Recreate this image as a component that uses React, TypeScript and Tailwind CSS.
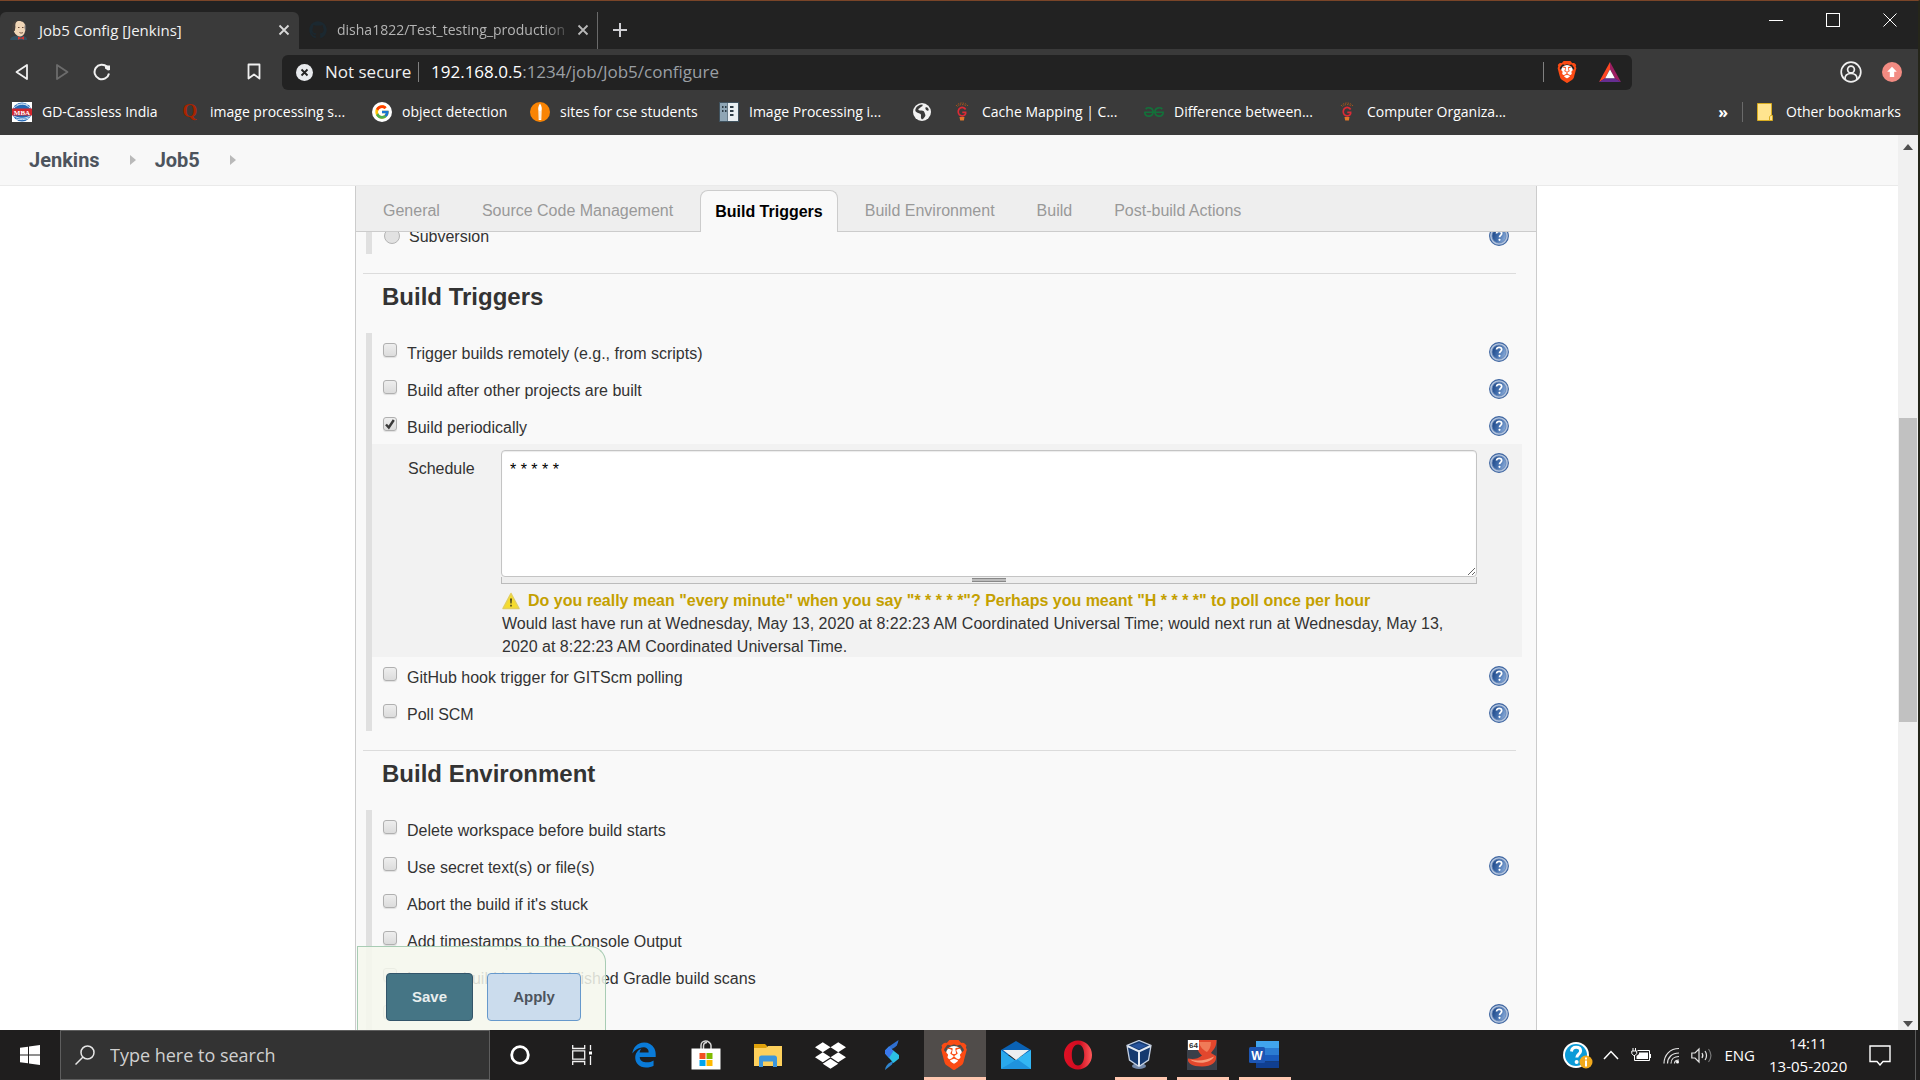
import type { ReactNode } from "react";
import { FaDropbox, FaEdgeLegacy, FaGithub } from "react-icons/fa6";
import { FcGoogle } from "react-icons/fc";
import { SiBrave, SiGeeksforgeeks } from "react-icons/si";

/* ---------- small icons ---------- */

function HelpIcon() {
  return (
    <svg viewBox="0 0 20 20" className="size-5" aria-hidden="true">
      <defs>
        <linearGradient id="helpFill" x1="0" y1="0.3" x2="1" y2="0.7">
          <stop offset="0" stopColor="#1d4787" />
          <stop offset="0.5" stopColor="#4470ae" />
          <stop offset="1" stopColor="#8fb0dc" />
        </linearGradient>
      </defs>
      <circle cx="10" cy="10" r="9.4" fill="#b4c5de" stroke="#3f66a1" strokeWidth="1.1" />
      <circle cx="10" cy="10" r="7" fill="url(#helpFill)" stroke="#5f82b5" strokeWidth="0.8" />
      <path d="M7.500 7.500c.2-1.400 1.200-2.200 2.700-2.200 1.600 0 2.500.8 2.500 2.100 0 1.800-2.200 2-2.200 3.800" fill="none" stroke="#fff" strokeWidth="1.700" />
      <circle cx="10.500" cy="13.800" r="1.100" fill="#fff" />
    </svg>
  );
}

function HelpButton() {
  return (
    <button type="button" aria-label="Help" className="size-5 shrink-0">
      <HelpIcon />
    </button>
  );
}

function WarningIcon() {
  return (
    <svg viewBox="0 0 18 18" className="size-[18px] shrink-0" aria-hidden="true">
      <path d="M9 1.500 17 16.500H1Z" fill="#f5dc2c" stroke="#e3cf5c" strokeWidth="1.500" strokeLinejoin="round" />
      <path d="M8 6.500h2l-.4 5H8.400zM8.200 12.800h1.600v1.600H8.200z" fill="#4b4720" />
    </svg>
  );
}

function JenkinsIcon() {
  return (
    <svg viewBox="0 0 18 20" className="h-5 w-[18px] shrink-0" aria-hidden="true">
      <path d="M0 20c.5-3 3-4 6-4h7c2 0 4 1 4 4z" fill="#335061" />
      <path d="M3 7C3 3 5.500 1 9 1s6.500 2 6.500 6.500c0 5-2 9-5.500 9S3 12 3 7z" fill="#f0d6b7" />
      <path d="M3 11C.5 5 3.500.3 8 .8 5.500 2 5 4 5.400 7l-.6 4z" fill="#47403c" />
      <path d="M15 4c1.500 2 1.500 5 .3 7.500l-.8-4z" fill="#6d6b6d" />
      <path d="M8 7.500h1.500M12 7.500h1.500M9.500 12.500c1.500.8 2.500.6 3.500 0" stroke="#5a3a2a" strokeWidth="0.9" fill="none" />
      <path d="M8 16.500l3 1.300 3-1.500v3.500l-3-1.200-3 1.200z" fill="#d33833" />
    </svg>
  );
}

function MbaIcon() {
  return (
    <svg viewBox="0 0 20 20" className="size-5" aria-hidden="true">
      <rect width="20" height="20" fill="#fff" />
      <circle cx="10" cy="10" r="9.600" fill="#2468b4" />
      <path d="M2 6c4-4 9-5 14-3M5 3c5-2 9-1 13 3M2 14c5 3 11 3 16 0M4 17c4 1 9 1 13-1" stroke="#cfe2f5" fill="none" />
      <path d="M0 6.500h20v7H0z" fill="#d2262e" />
      <text x="10" y="12.500" textAnchor="middle" fontSize="7" fontWeight="700" fontFamily="Liberation Serif, serif" fill="#fff">MBA</text>
    </svg>
  );
}

function CandleIcon() {
  return (
    <svg viewBox="0 0 20 20" className="size-5" aria-hidden="true">
      <circle cx="10" cy="10" r="10" fill="#f98404" />
      <path d="M10 1.500c2 3 2 5 1.600 7L11.300 18H8.700l-.3-9.500c-.4-2-.4-4 1.600-7z" fill="#fff" />
      <path d="M10 9v8" stroke="#fbc27a" strokeWidth="0.600" />
    </svg>
  );
}

function BuildingIcon() {
  return (
    <svg viewBox="0 0 20 20" className="size-5" aria-hidden="true">
      <rect width="20" height="20" fill="#40525e" />
      <rect x="1" y="1" width="7.500" height="18" fill="#8fa6b5" />
      <rect x="9" y="1" width="10" height="18" fill="#e9eff2" />
      <path d="M3 4h1.500v2H3zM6 4h1.500v2H6zM3 8h1.500v2H3zM6 8h1.500v2H6zM11 4h3.500v2H11zM11 8h3.500v2H11zM11 12h3.500v2H11z" fill="#2e3d47" />
    </svg>
  );
}

function GlobeIcon() {
  return (
    <svg viewBox="0 0 20 20" className="size-5" aria-hidden="true">
      <circle cx="10" cy="10" r="9" fill="#f2f2f2" />
      <path d="M3.500 7c1-3 4-4.500 7-4.500.5 1.500-.5 2-1.500 2.500S8 6 7 6.500 6 8.500 8 8.500s4 0 4.500 2S14 13 13 14.500 11 17 10 17.500c-1.500-1-1-3-1-4.500S6.500 11.500 5 10.500 3 9 3.500 7z" fill="#3a3a3a" />
      <path d="M13.500 5.500c1-.5 2.500 0 3 1.500s0 2-1.500 1.500-2-2.500-1.500-3z" fill="#3a3a3a" />
    </svg>
  );
}

function BulbIcon() {
  return (
    <svg viewBox="0 0 20 20" className="size-5" fill="none" aria-hidden="true">
      <path d="M4 4c3-4 9-4 12 0M5.500 4.500c2-2.600 7-2.600 9 0" stroke="#a3541c" strokeDasharray="1.500 1" />
      <path d="M13.600 7.500C12.500 5.300 10 5 8.200 6c-2.300 1.400-2.600 4.800-.9 6.700 1.700 1.800 5.600 1.600 6.300-.9v-1.500h-3.300" stroke="#dc2a36" strokeWidth="1.700" />
      <path d="M7.500 15h5l-.6 3.500H8.200z" fill="#e0762a" />
    </svg>
  );
}

function FolderPageIcon() {
  return (
    <svg viewBox="0 0 16 20" className="h-5 w-4" aria-hidden="true">
      <path d="M.5 1.500h14v12h1v5H.5z" fill="#ffe48f" stroke="#d8ac20" />
      <path d="M12.500 18.500v-4l2-1.500" fill="none" stroke="#d8ac20" />
    </svg>
  );
}

function BatIcon() {
  return (
    <svg viewBox="0 0 22 20" className="h-5 w-[22px]" aria-hidden="true">
      <path d="M11 0 0 20l6-3.500L11 7z" fill="#ff4724" />
      <path d="M11 0l11 20-6-3.500L11 7z" fill="#9e1f63" />
      <path d="M0 20h22l-6-3.800H6z" fill="#662d91" />
      <path d="M11 7.200 15.800 16.200H6.200z" fill="#fff" />
    </svg>
  );
}

function BraveIcon({ box, icon }: { box: string; icon: string }) {
  return (
    <span className={`relative flex items-center justify-center ${box}`}>
      <span className="absolute inset-x-[24%] inset-y-[20%] rounded-full bg-white" />
      <SiBrave className={`relative text-[#fb4b14] ${icon}`} />
    </span>
  );
}

/* ---------- browser chrome ---------- */

function BrowserTabs() {
  return (
    <div className="flex h-12 shrink-0 items-end bg-[#222222]">
      <div className="flex h-[37px] w-[299px] items-center rounded-t-md bg-[#3a3a3a] pb-[2px] pl-[10px] pr-[5px]">
        <JenkinsIcon />
        <span className="ml-[11px] flex-1 whitespace-nowrap text-[15px] leading-6 text-[#f2f2f2]">Job5 Config [Jenkins]</span>
        <button type="button" aria-label="Close tab" className="p-1">
          <svg viewBox="0 0 12 12" className="size-3" stroke="#d8d8d8" strokeWidth="1.800"><path d="M1.500 1.500l9 9M10.500 1.500l-9 9" /></svg>
        </button>
      </div>
      <div className="flex h-[37px] w-[299px] items-center border-r border-[#6a6a6a] pb-[2px] pl-[10px] pr-1">
        <FaGithub className="size-[18px] shrink-0 text-[#1b2830]" />
        <span className="ml-[10px] min-w-0 flex-1 overflow-hidden whitespace-nowrap text-[14px] leading-6 text-[#b4b4b4] [mask-image:linear-gradient(to_right,black_88%,transparent)]">
          disha1822/Test_testing_production
        </span>
        <button type="button" aria-label="Close tab" className="p-1">
          <svg viewBox="0 0 12 12" className="size-3" stroke="#b8b8b8" strokeWidth="1.800"><path d="M1.500 1.500l9 9M10.500 1.500l-9 9" /></svg>
        </button>
      </div>
      <button type="button" aria-label="New tab" className="mb-[11px] ml-[14px]">
        <svg viewBox="0 0 16 16" className="size-4" stroke="#d0d0d4" strokeWidth="2"><path d="M8 1v14M1 8h14" /></svg>
      </button>
      <div className="ml-auto flex gap-[43px] self-start pr-[21px] pt-3">
        <button type="button" aria-label="Minimize"><svg viewBox="0 0 14 14" className="size-[14px]" stroke="#fff"><path d="M0 7.500h14" /></svg></button>
        <button type="button" aria-label="Maximize"><svg viewBox="0 0 14 14" className="size-[14px]" stroke="#fff" fill="none"><rect x="0.500" y="0.500" width="13" height="13" /></svg></button>
        <button type="button" aria-label="Close"><svg viewBox="0 0 14 14" className="size-[14px]" stroke="#fff"><path d="M.5.5l13 13M13.500.5l-13 13" /></svg></button>
      </div>
    </div>
  );
}

function AddressBar() {
  return (
    <div className="flex h-[46px] shrink-0 items-center bg-[#3a3a3a]">
      <div className="flex w-[282px] items-center pl-[14px]">
        <button type="button" aria-label="Back"><svg viewBox="0 0 16 18" className="h-[18px] w-4" fill="none" stroke="#f0f0f0" strokeWidth="1.800" strokeLinejoin="round"><path d="M13 2v14L2.500 9z" /></svg></button>
        <button type="button" aria-label="Forward" className="ml-6"><svg viewBox="0 0 16 18" className="h-[18px] w-4" fill="none" stroke="#6c6c6c" strokeWidth="1.800" strokeLinejoin="round"><path d="M3 2v14L13.500 9z" /></svg></button>
        <button type="button" aria-label="Reload" className="ml-[23px]">
          <svg viewBox="0 0 18 18" className="size-[18px]" fill="none" stroke="#f0f0f0" strokeWidth="2"><path d="M16 10.500A7.300 7.300 0 1 1 14 3.800" /><path d="M12 2.500h5v4.500l-2 .5-3-2z" fill="#f0f0f0" stroke="none" /></svg>
        </button>
        <button type="button" aria-label="Bookmark this page" className="ml-auto mr-[21px]">
          <svg viewBox="0 0 14 18" className="h-[18px] w-[14px]" fill="none" stroke="#f0f0f0" strokeWidth="1.800" strokeLinejoin="round"><path d="M1.500 1.500h11v14L7 11.500l-5.500 4z" /></svg>
        </button>
      </div>
      <div className="flex h-[35px] min-w-0 flex-1 items-center rounded-md bg-[#222222] pl-[14px] pr-[11px]">
        <svg viewBox="0 0 17 17" className="size-[17px] shrink-0"><circle cx="8.500" cy="8.500" r="8.500" fill="#e8eaed" /><path d="M5.500 5.500l6 6M11.500 5.500l-6 6" stroke="#222" strokeWidth="1.800" /></svg>
        <span className="ml-3 w-[84px] whitespace-nowrap text-[17px] leading-6 text-[#f0f0f0]">Not secure</span>
        <span className="ml-[9px] h-5 w-px bg-[#808080]" />
        <span className="ml-3 flex-1 truncate text-[17px] leading-6 text-[#9a9fa4]"><span className="text-white">192.168.0.5</span>:1234/job/Job5/configure</span>
        <span className="h-5 w-px bg-[#808080]" />
        <button type="button" aria-label="Brave Shields" className="ml-[11px]"><BraveIcon box="size-6" icon="size-[22px]" /></button>
        <button type="button" aria-label="Brave Rewards" className="ml-5"><BatIcon /></button>
      </div>
      <div className="ml-auto flex w-[286px] items-center justify-end gap-5 pr-4">
        <button type="button" aria-label="Profile">
          <svg viewBox="0 0 22 22" className="size-[22px]" fill="none" stroke="#f0f0f0" strokeWidth="1.700"><circle cx="11" cy="11" r="9.800" /><circle cx="11" cy="8.500" r="3.400" /><path d="M5 18c0-3.500 2.500-5.500 6-5.500s6 2 6 5.500" /></svg>
        </button>
        <button type="button" aria-label="Update available">
          <svg viewBox="0 0 20 20" className="size-5"><circle cx="10" cy="10" r="10" fill="#f28b82" /><path d="M10 4.800l4.800 5h-2.600V15H7.800V9.800H5.200z" fill="#fff" /></svg>
        </button>
      </div>
    </div>
  );
}

const bookmarks: { icon: ReactNode; label: string; width: string }[] = [
  { icon: <MbaIcon />, label: "GD-Cassless India", width: "w-[168px]" },
  { icon: <span className="flex h-5 w-5 items-center justify-center font-['Liberation_Serif',serif] text-[19px] font-bold text-[#a82400]">Q</span>, label: "image processing s...", width: "w-[192px]" },
  { icon: <span className="flex size-5 items-center justify-center rounded-full bg-white"><FcGoogle className="size-4" /></span>, label: "object detection", width: "w-[158px]" },
  { icon: <CandleIcon />, label: "sites for cse students", width: "w-[189px]" },
  { icon: <BuildingIcon />, label: "Image Processing i...", width: "w-[193px]" },
  { icon: <GlobeIcon />, label: "", width: "w-10" },
  { icon: <BulbIcon />, label: "Cache Mapping | C...", width: "w-[192px]" },
  { icon: <SiGeeksforgeeks className="size-5 text-[#14703a]" />, label: "Difference between...", width: "w-[193px]" },
  { icon: <BulbIcon />, label: "Computer Organiza...", width: "w-[190px]" },
];

function BookmarksBar() {
  return (
    <nav className="flex h-10 shrink-0 items-center bg-[#3a3a3a] pb-[7px] pl-3 pr-[17px]">
      {bookmarks.map((b) => (
        <a key={b.label + b.width} href="#" aria-label={b.label || "Website"} className={`flex shrink-0 items-center gap-[10px] ${b.width}`}>
          <span className="size-5 shrink-0">{b.icon}</span>
          {b.label && <span className="whitespace-nowrap text-[14px] leading-5 text-white">{b.label}</span>}
        </a>
      ))}
      <div className="ml-auto flex items-center">
        <button type="button" className="text-[16px] font-bold leading-5 text-white">»</button>
        <span className="ml-[14px] h-5 w-px bg-[#6a6a6a]" />
        <a href="#" className="ml-[14px] flex items-center gap-[13px] text-[14px] leading-5 text-white"><FolderPageIcon />Other bookmarks</a>
      </div>
    </nav>
  );
}

/* ---------- Jenkins page ---------- */

function Breadcrumbs() {
  return (
    <nav className="flex h-[51px] shrink-0 items-center border-b border-[#eaeaea] bg-[#f8f8f8] pl-[29px] font-[Roboto,sans-serif] text-[20px] font-bold text-[#4d545d]">
      <a href="#">Jenkins</a>
      <svg viewBox="0 0 6 10" className="ml-[30px] h-[10px] w-[6px]" fill="#b9b9b9"><path d="M0 0l6 5-6 5z" /></svg>
      <a href="#" className="ml-[19px]">Job5</a>
      <svg viewBox="0 0 6 10" className="ml-[30px] h-[10px] w-[6px]" fill="#b9b9b9"><path d="M0 0l6 5-6 5z" /></svg>
    </nav>
  );
}

const configTabs = ["General", "Source Code Management", "Build Triggers", "Build Environment", "Build", "Post-build Actions"];

function ConfigTabs() {
  return (
    <div role="tablist" className="relative z-10 flex h-[46px] shrink-0 items-end gap-3 border-b border-[#cccccc] bg-[#eeeeee] pl-3">
      {configTabs.map((t) =>
        t === "Build Triggers" ? (
          <button key={t} type="button" role="tab" aria-selected="true" className="-mb-px h-[42px] whitespace-nowrap rounded-t-lg border border-b-0 border-[#cccccc] bg-[#f9f9f9] px-[14px] font-bold text-black">
            {t}
          </button>
        ) : (
          <button key={t} type="button" role="tab" aria-selected="false" className="h-10 whitespace-nowrap px-[15px] text-[#999999]">
            {t}
          </button>
        ),
      )}
    </div>
  );
}

function OptionRow({ label, help, checked }: { label: string; help?: boolean; checked?: boolean }) {
  return (
    <div className="flex h-[37px] items-start pl-[11px] pr-[7px] pt-[9px]">
      <label className="flex items-start gap-[10px] leading-6">
        <span className="relative mt-px size-[14px]">
          <input type="checkbox" defaultChecked={checked} className="peer block size-[14px] appearance-none rounded-[3px] border border-[#b0b0b0] bg-linear-to-b from-[#eeeeee] to-[#dcdcdc] shadow-[0_1px_1px_rgba(0,0,0,0.1)]" />
          <svg viewBox="0 0 14 14" className="pointer-events-none absolute inset-0 hidden peer-checked:block" fill="none" stroke="#3a3a3a" strokeWidth="2.400"><path d="M3 7.500l2.800 3 5-7.500" /></svg>
        </span>
        {label}
      </label>
      {help && <span className="ml-auto flex"><HelpButton /></span>}
    </div>
  );
}

function Section({ title, children }: { title: string; children: ReactNode }) {
  return (
    <section>
      <div className="ml-[7px] mr-5 h-[60px] border-t border-[#dcdcdc] pl-[19px] pt-2">
        <h2 className="text-[24px] font-bold leading-[29px]">{title}</h2>
      </div>
      <div className="ml-[10px] mr-5 border-l-[6px] border-[#e0e0e0]">{children}</div>
    </section>
  );
}

function SchedulePanel() {
  return (
    <div className="-mr-[6px] flex h-[213px] items-start bg-[#f2f2f2] pl-9 pr-[13px] pt-[6px]">
      <label htmlFor="schedule" className="w-[93px] pt-[7px] leading-6">Schedule</label>
      <div className="min-w-0 flex-1">
        <textarea
          id="schedule"
          defaultValue="* * * * *"
          className="block h-[127px] w-full resize-y rounded border border-[#c4c4c4] bg-white px-2 py-[7px] leading-6 text-black shadow-[inset_0_1px_1px_rgba(0,0,0,0.08)]"
        />
        <div className="flex h-[7px] items-center justify-center border border-t-0 border-[#bbbbbb] bg-[#eeeeee]">
          <span className="h-1 w-[34px] border-y border-[#888888] bg-[#bbbbbb]" />
        </div>
        <p className="flex items-center gap-2 pl-px pt-[6px] font-bold leading-[22px] text-[#c4a000]"><WarningIcon />Do you really mean "every minute" when you say "* * * * *"? Perhaps you meant "H * * * *" to poll once per hour</p>
        <p className="pl-px leading-[23px]">
          Would last have run at Wednesday, May 13, 2020 at 8:22:23 AM Coordinated Universal Time; would next run at Wednesday, May 13, 2020 at 8:22:23 AM Coordinated Universal Time.
        </p>
      </div>
      <span className="ml-3 mt-[3px] flex"><HelpButton /></span>
    </div>
  );
}

function ConfigForm() {
  return (
    <div className="min-h-0 flex-1 overflow-hidden">
      <div className="-mt-4 mb-[19px] ml-[10px] mr-5 flex h-[38px] items-start border-l-[6px] border-[#e0e0e0] pl-3 pr-[7px] pt-[10px]">
        <label className="flex items-start gap-[9px] leading-[22px]">
          <input type="radio" name="scm" className="mt-[2px] size-4 appearance-none rounded-full border border-[#b4b4b4] bg-[#e2e2e2]" />
          Subversion
        </label>
        <span className="ml-auto flex"><HelpButton /></span>
      </div>
      <Section title="Build Triggers">
        <OptionRow label="Trigger builds remotely (e.g., from scripts)" help />
        <OptionRow label="Build after other projects are built" help />
        <OptionRow label="Build periodically" help checked />
        <SchedulePanel />
        <OptionRow label="GitHub hook trigger for GITScm polling" help />
        <OptionRow label="Poll SCM" help />
      </Section>
      <div className="h-[19px]" />
      <Section title="Build Environment">
        <OptionRow label="Delete workspace before build starts" />
        <OptionRow label="Use secret text(s) or file(s)" help />
        <OptionRow label="Abort the build if it's stuck" />
        <OptionRow label="Add timestamps to the Console Output" />
        <OptionRow label="Inspect build log for published Gradle build scans" />
        <OptionRow label="With Ant" help />
      </Section>
    </div>
  );
}

function JenkinsPage() {
  return (
    <div className="flex min-w-0 flex-1 flex-col bg-white">
      <Breadcrumbs />
      <main className="relative ml-[355px] mr-[361px] flex min-h-0 flex-1 flex-col border-x border-[#cccccc] bg-[#f9f9f9] font-['Liberation_Sans',Arial,sans-serif] text-[16px] text-[#333333]">
        <ConfigTabs />
        <ConfigForm />
        <div className="absolute bottom-0 left-px flex h-[84px] w-[249px] gap-[14px] rounded-tr-2xl border border-b-0 border-[#a8ccb4] bg-[#f6f8ed]/85 pl-7 pt-[26px]">
          <button type="button" className="h-12 w-[87px] rounded border border-[#33556a] bg-[#457585] text-[15px] font-bold text-[#e8eeee]">Save</button>
          <button type="button" className="h-12 w-[94px] rounded border border-[#6699cc] bg-[#cbdced] text-[15px] font-bold text-[#4d545d]">Apply</button>
        </div>
      </main>
    </div>
  );
}

function Scrollbar() {
  return (
    <div className="flex w-5 shrink-0 flex-col items-center bg-[#f0f0f0] pb-[3px] pt-[9px]" aria-hidden="true">
      <svg viewBox="0 0 10 6" className="h-[6px] w-[10px]" fill="#505050"><path d="M5 0l5 6H0z" /></svg>
      <div className="flex w-full flex-1 flex-col px-px">
        <div className="grow-[268]" />
        <div className="grow-[305] bg-[#c1c1c1]" />
        <div className="grow-[299]" />
      </div>
      <svg viewBox="0 0 10 6" className="h-[6px] w-[10px]" fill="#505050"><path d="M0 0h10L5 6z" /></svg>
    </div>
  );
}

/* ---------- Windows taskbar ---------- */

function TaskItem({ label, children, state }: { label: string; children: ReactNode; state?: "active" | "open" }) {
  return (
    <button type="button" aria-label={label} className={`relative flex h-full w-[62px] shrink-0 items-center justify-center pr-[2px] ${state === "active" ? "bg-[#504c4a]" : ""}`}>
      {children}
      {state === "active" && <span className="absolute inset-x-0 bottom-0 h-[3px] bg-[#ffc7b0]" />}
      {state === "open" && <span className="absolute inset-x-[5px] bottom-0 h-[3px] bg-[#ffc7b0]" />}
    </button>
  );
}

function Taskbar() {
  return (
    <footer className="flex h-[50px] shrink-0 items-center bg-[#1f1e1e] text-white">
      <button type="button" aria-label="Start" className="flex h-full w-[60px] items-center justify-center">
        <svg viewBox="0 0 20 20" className="size-5" fill="#fff"><path d="M0 2.800 8 1.700v7.800H0zM9 1.500 20 0v9.500H9zM0 10.500h8v7.800L0 17.200zM9 10.500h11V20L9 18.500z" /></svg>
      </button>
      <div className="flex h-full w-[430px] items-center border border-[#5e5e5e] bg-[#333333] pl-[14px]">
        <svg viewBox="0 0 20 20" className="size-5" fill="none" stroke="#e6e6e6" strokeWidth="1.500"><circle cx="12.500" cy="7.500" r="6.500" /><path d="M8 12l-7.500 7.500" /></svg>
        <input type="text" aria-label="Type here to search" placeholder="Type here to search" className="ml-[15px] w-80 bg-transparent text-[18px] leading-6 text-white outline-none placeholder:text-[#d0d0d0]" />
      </div>
      <TaskItem label="Cortana"><svg viewBox="0 0 20 20" className="size-5" fill="none" stroke="#fff" strokeWidth="2.800"><circle cx="10" cy="10" r="8.300" /></svg></TaskItem>
      <TaskItem label="Task View">
        <svg viewBox="0 0 20 20" className="size-5" fill="none" stroke="#f2f2f2" strokeWidth="1.300"><path d="M.7 0v3.500h12V0M.7 5.800h12v8.400H.7zM.7 20v-3.500h12V20M18.500 0v5M18.500 11v9" /><path d="M17 6.500h3v3h-3z" fill="#fff" stroke="none" /></svg>
      </TaskItem>
      <TaskItem label="Edge"><FaEdgeLegacy className="size-[26px] text-[#0a7bd8]" /></TaskItem>
      <TaskItem label="Microsoft Store">
        <svg viewBox="0 0 30 30" className="size-[30px]"><path d="M10 9V5.500C10 3 12 1 14.500 1S20 3 20 5.500V9M12.500 9V6c0-2 1.300-3.500 3.500-3.500" fill="none" stroke="#d8d8d8" strokeWidth="1.500" /><path d="M.5 8.500h29v21H.5z" fill="#fff" /><path d="M8.500 13h6v6h-6z" fill="#f25022" /><path d="M15.500 13h6v6h-6z" fill="#7fba00" /><path d="M8.500 20h6v6h-6z" fill="#00a4ef" /><path d="M15.500 20h6v6h-6z" fill="#ffb900" /></svg>
      </TaskItem>
      <TaskItem label="File Explorer">
        <svg viewBox="0 0 28 24" className="h-6 w-7"><path d="M0 1h11l2 2v3H0z" fill="#dfa10b" /><path d="M0 5h12l2-2h14v20H0z" fill="#fdd05c" /><path d="M5 24V15c0-1.500 1-2.500 2.500-2.500h13c1.500 0 2.500 1 2.500 2.500v9h-4v-5.500H9V24z" fill="#3c96dc" /></svg>
      </TaskItem>
      <TaskItem label="Dropbox"><FaDropbox className="size-[31px] text-white" /></TaskItem>
      <TaskItem label="StormPlay">
        <svg viewBox="0 0 16 30" className="h-[30px] w-4">
          <path d="M14.500 0 5 6.500 4 10l5-1.500C12.500 7 14 4 14.500 0z" fill="#2f6fd0" />
          <path d="M1 30l7-5.500 2-4.500-3 2c-4 2-5.500 4.500-6 8z" fill="#2f86d0" />
          <path d="M5 6.500 1 10.500v3L9.500 23l5.500-4.500v-3.500L8 9.500z" fill="#2cc0e6" />
          <path d="M5 6.500 1 10.500v3l4 4.500 4.500-7L8 9.500z" fill="#3a78ec" />
        </svg>
      </TaskItem>
      <TaskItem label="Brave" state="active"><BraveIcon box="size-[30px]" icon="size-[30px]" /></TaskItem>
      <TaskItem label="Mail">
        <svg viewBox="0 0 30 28" className="h-7 w-[30px]"><path d="M0 9 15 0l15 9v5H0z" fill="#0a62b4" /><path d="M0 9l15 11L0 28z" fill="#29a8ec" /><path d="M30 9v19H0z" fill="#33b6f4" /><path d="M0 28h30L16 18z" fill="#1f93de" /><path d="M2 9h26L15 19z" fill="#eceef0" /></svg>
      </TaskItem>
      <TaskItem label="Opera">
        <svg viewBox="0 0 28 30" className="h-[30px] w-7">
          <defs><linearGradient id="operaRing" x1="0" y1="0" x2="1" y2="0"><stop offset="0" stopColor="#e01024" /><stop offset="0.55" stopColor="#d00c20" /><stop offset="1" stopColor="#ff5a5a" /></linearGradient></defs>
          <path fillRule="evenodd" d="M14 .5C22 .5 28 7 28 15s-6 14.500-14 14.500S0 23 0 15 6 .5 14 .5zM14 4.500c-4 0-6.200 4.500-6.200 10.500S10 25.500 14 25.500 20.200 21 20.200 15 18 4.500 14 4.500z" fill="url(#operaRing)" />
        </svg>
      </TaskItem>
      <TaskItem label="VirtualBox" state="open">
        <svg viewBox="0 0 26 30" className="mr-[2px] h-[30px] w-[26px]"><ellipse cx="13" cy="26" rx="7" ry="3" fill="#7388a8" /><path d="M13 .5 25 5.500 22.500 20 13 26.500 3.500 20 1 5.500z" fill="#14396f" stroke="#c4d0e2" strokeWidth="1.300" /><path d="M13 11.500V26M1.500 6 13 11.500 24.500 6" stroke="#e4ebf4" strokeWidth="2" fill="none" /><path d="M5 5.800 13 3l8 2.800-8 3.400z" fill="#28549c" /></svg>
      </TaskItem>
      <TaskItem label="Red hat viewer" state="open">
        <svg viewBox="0 0 30 30" className="size-[30px]"><path d="M0 0h30v30H0z" fill="#3a3f49" /><path d="M9 0h20.500c0 7-2.500 9-5.500 13l5 3c1 6-4 10.500-14 10.500S0 23 1 18.500c5 1 10 .5 14-3-4-3-5.500-8-6-15.500z" fill="#e2472d" /><path d="M12 2h12c0 5-2 8-4 10-4-2-7-5-8-10z" fill="#f07a58" /><path d="M3 19.500c8 2 16 1 24-3-2 6-16 9-24 3z" fill="#f79a78" /><path d="M1 0h11v10H1z" fill="#fff" /><text x="6.500" y="8" fontSize="8" fontWeight="700" textAnchor="middle" fill="#333" fontFamily="Liberation Sans, sans-serif">64</text></svg>
      </TaskItem>
      <TaskItem label="Word" state="open">
        <svg viewBox="0 0 30 28" className="h-7 w-[30px]"><path d="M7 0h23v7.500H7z" fill="#41a5ee" /><path d="M7 7h23v7H7z" fill="#2b7cd3" /><path d="M7 14h23v6.500H7z" fill="#185abd" /><path d="M7 20.500h23V27H7z" fill="#103f91" /><rect y="6" width="16" height="16" rx="1.500" fill="#1d56b4" /><text x="8" y="18.500" fontSize="12" fontWeight="700" textAnchor="middle" fill="#fff" fontFamily="Liberation Sans, sans-serif">W</text></svg>
      </TaskItem>
      <div className="ml-auto flex h-full items-center">
        <svg viewBox="0 0 30 32" className="h-8 w-[30px]"><circle cx="13" cy="16" r="13" fill="#fff" /><circle cx="13" cy="16" r="11" fill="#0b9bd8" /><path d="M8.500 12.500c.3-3 2-4.200 4.600-4.200s4.500 1.400 4.500 3.800c0 3-3.800 3.200-3.800 6.500" fill="none" stroke="#fff" strokeWidth="3" /><circle cx="13.600" cy="23" r="2" fill="#fff" /><circle cx="23" cy="23" r="6.500" fill="#f2a91c" /><path d="M23 18.500v2M23 21.500v6" stroke="#fff" strokeWidth="2" /></svg>
        <svg viewBox="0 0 16 10" className="ml-[10px] h-[10px] w-4" fill="none" stroke="#fff" strokeWidth="1.500"><path d="M1 9l7-7.500L15 9" /></svg>
        <svg viewBox="0 0 20 15" className="ml-3 h-[15px] w-5" fill="none" stroke="#fff"><path d="M6.500 2.500h12v10h-15V7.500M2 0v3M4.500 0v3M.8 3h4.900v2.500L4 7.500H2.500L.8 5.500z" /><path d="M8 4.500h9v6.500H5.500V8L8 6z" fill="#fff" stroke="none" /><path d="M19.500 6v4" /></svg>
        <svg viewBox="0 0 17 17" className="ml-3 size-[17px]" fill="none" stroke="#e4e4e4" strokeWidth="1.200"><path d="M1 16.500C1 8 7 1.500 16 1.500M4.500 16.500c0-6 4.500-10.500 11.500-10.500M8 16.500c0-4 3-7 8-7M11.500 16.500c0-2 1.500-3.500 4.500-3.500" /><circle cx="14.500" cy="15" r="1.500" fill="#fff" stroke="none" /></svg>
        <svg viewBox="0 0 21 17" className="ml-[11px] h-[17px] w-[21px]" fill="none" stroke="#e4e4e4" strokeWidth="1.200"><path d="M.8 6H4l4-4v13l-4-4H.8z" /><path d="M11 6c1 1.500 1 3.500 0 5M14 4c2 2.500 2 6.500 0 9" /><path d="M17.500 2c3 4 3 9 0 13" stroke="#777" /></svg>
        <span className="ml-3 text-[15px] leading-5">ENG</span>
        <div className="ml-[14px] w-[78px] whitespace-nowrap text-center text-[15px] leading-[23px]"><div>14:11</div><div>13-05-2020</div></div>
        <svg viewBox="0 0 22 22" className="ml-[22px] h-[22px] w-[22px]" fill="none" stroke="#fff" strokeWidth="1.400"><path d="M1 2h20v15.500h-7L11 21l-3-3.500H1z" /></svg>
        <span className="ml-6 mr-1 h-full w-px bg-[#5a5a5a]" />
      </div>
    </footer>
  );
}

export default function App() {
  return (
    <div className="flex h-screen flex-col overflow-hidden bg-[#222222] font-['Open_Sans','Noto_Sans',sans-serif]">
      <div className="flex min-h-0 flex-1 flex-col border-r-2 border-t border-r-[#25261a] border-t-[#7a4528]">
        <BrowserTabs />
        <AddressBar />
        <BookmarksBar />
        <div className="flex min-h-0 flex-1">
          <JenkinsPage />
          <Scrollbar />
        </div>
      </div>
      <Taskbar />
    </div>
  );
}
